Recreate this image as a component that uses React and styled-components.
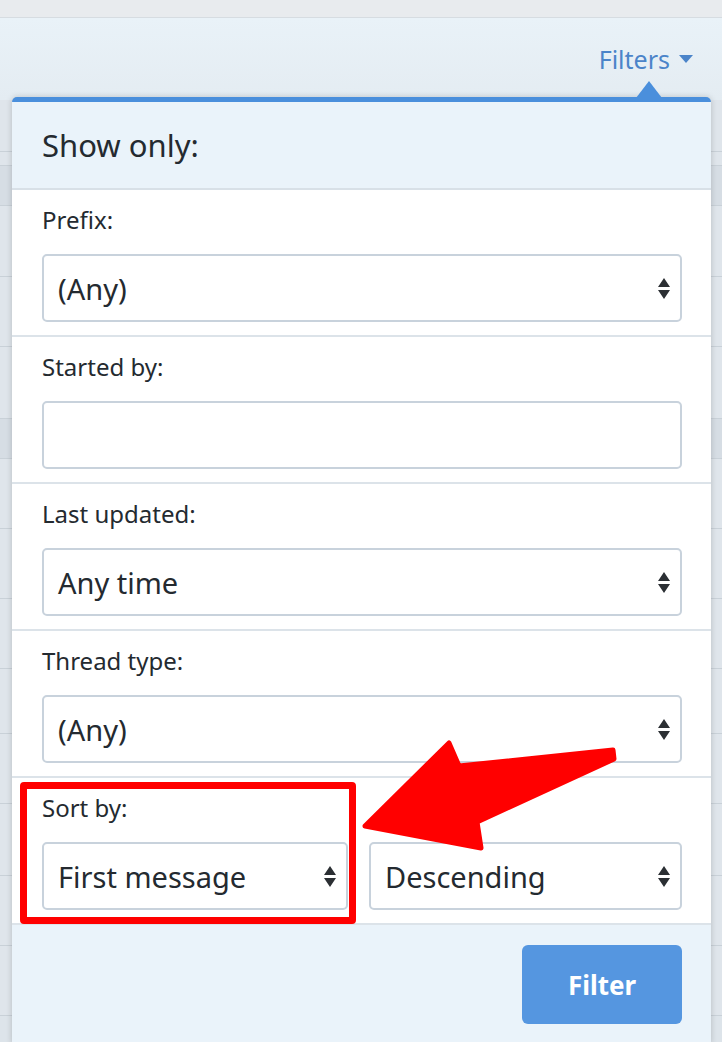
import React from "react";
import styled, { createGlobalStyle } from "styled-components";

const Global = createGlobalStyle`
  html, body { margin: 0; padding: 0; }
  body {
    background: #dfe5ea;
    font-family: "Noto Sans", "Open Sans", sans-serif;
    color: #242a30;
  }
  * { box-sizing: border-box; }
`;

const Page = styled.div`
  position: relative;
  width: 722px;
  height: 1042px;
  overflow: hidden;
  background: #dde4ea;
`;

const TopStrip = styled.div`
  height: 18px;
  background: #e8ebee;
  border-bottom: 1px solid #d6dce1;
`;

const NavBar = styled.div`
  height: 82px;
  display: flex;
  align-items: center;
  justify-content: flex-end;
  padding-right: 29px;
  background: linear-gradient(#e9f2f8, #e4ecf2);
`;

const FiltersLink = styled.span`
  display: flex;
  align-items: center;
  gap: 9px;
  font-size: 25px;
  color: #4b84c9;
`;

const ListArea = styled.div`
  display: flex;
  flex-direction: column;
`;

const ListRow = styled.div`
  height: ${(p) => p.$h}px;
  background: ${(p) => (p.$shade ? "#d6dde4" : "#dfe5eb")};
  border-bottom: 1px solid #c9d1d8;
`;

const Menu = styled.div`
  position: absolute;
  top: 97px;
  left: 12px;
  width: 699px;
  border-top: 5px solid #4a8fdc;
  border-radius: 5px 5px 0 0;
  background: #ffffff;
  box-shadow: 0 0 6px rgba(0, 0, 0, 0.18);
`;

const Pointer = styled.svg`
  position: absolute;
  top: -21px;
  left: 624px;
`;

const Header = styled.div`
  height: 88px;
  display: flex;
  align-items: center;
  padding: 0 29px 0 30px;
  background: #eaf3fa;
  border-bottom: 2px solid #d8e0e7;
  font-size: 31px;
`;

const Row = styled.div`
  padding: 13px 29px 13px 30px;
  border-bottom: 2px solid #dce3e9;
  display: flex;
  flex-direction: column;
`;

const Label = styled.div`
  font-size: 24px;
  line-height: 34px;
  margin-bottom: 17px;
`;

const Pair = styled.div`
  display: grid;
  grid-template-columns: 306px 1fr;
  gap: 21px;
`;

const SelectBox = styled.div`
  height: 68px;
  display: flex;
  align-items: center;
  justify-content: space-between;
  padding: 0 10px 0 14px;
  border: 2px solid #c8d2dc;
  border-radius: 5px;
  background: #fff;
  font-size: 29px;
  color: #242a30;
`;

const TextInput = styled.input`
  height: 68px;
  border: 2px solid #c8d2dc;
  border-radius: 5px;
  background: #fff;
  font: inherit;
  font-size: 29px;
  padding: 0 14px;
  outline: none;
`;

const Footer = styled.div`
  display: flex;
  justify-content: flex-end;
  padding: 20px 29px 20px 30px;
  background: #eaf3fa;
`;

const Button = styled.button`
  width: 160px;
  height: 79px;
  border: none;
  border-radius: 6px;
  background: #5596e0;
  color: #fff;
  font-family: "Noto Sans", sans-serif;
  font-weight: 700;
  font-size: 26px;
`;

const Highlight = styled.div`
  position: absolute;
  left: 20px;
  top: 782px;
  width: 336px;
  height: 142px;
  border: 7px solid #ff0000;
  border-radius: 4px;
  pointer-events: none;
`;

const Arrow = styled.svg`
  position: absolute;
  left: 340px;
  top: 730px;
  pointer-events: none;
`;

const Updown = () => (
  <svg width="12" height="21" viewBox="0 0 12 21">
    <path d="M6 0 L12 9 L0 9 Z M0 12 L12 12 L6 21 Z" fill="#2b2f33" />
  </svg>
);

const Select = ({ children }) => (
  <SelectBox>
    <span>{children}</span>
    <Updown />
  </SelectBox>
);

const Caret = () => (
  <svg width="14" height="8" viewBox="0 0 14 8">
    <path d="M0 0 L14 0 L7 8 Z" fill="#4b84c9" />
  </svg>
);

const rows = [
  { h: 52, s: false },
  { h: 14, s: false },
  { h: 40, s: true },
  { h: 71, s: false },
  { h: 70, s: false },
  { h: 72, s: false },
  { h: 40, s: true },
  { h: 70, s: false },
  { h: 70, s: false },
  { h: 70, s: false },
  { h: 65, s: false },
  { h: 70, s: false },
  { h: 72, s: false },
  { h: 70, s: false },
  { h: 70, s: false },
];

export default function App() {
  return (
    <>
      <Global />
      <Page>
        <TopStrip />
        <NavBar>
          <FiltersLink>
            Filters <Caret />
          </FiltersLink>
        </NavBar>
        <ListArea>
          {rows.map((r, i) => (
            <ListRow key={i} $h={r.h} $shade={r.s} />
          ))}
        </ListArea>

        <Menu>
          <Pointer width="26" height="17" viewBox="0 0 26 17">
            <path d="M0 17 L13 0 L26 17 Z" fill="#4a8fdc" />
          </Pointer>
          <Header>Show only:</Header>
          <Row>
            <Label>Prefix:</Label>
            <Select>(Any)</Select>
          </Row>
          <Row>
            <Label>Started by:</Label>
            <TextInput type="text" />
          </Row>
          <Row>
            <Label>Last updated:</Label>
            <Select>Any time</Select>
          </Row>
          <Row>
            <Label>Thread type:</Label>
            <Select>(Any)</Select>
          </Row>
          <Row>
            <Label>Sort by:</Label>
            <Pair>
              <Select>First message</Select>
              <Select>Descending</Select>
            </Pair>
          </Row>
          <Footer>
            <Button>Filter</Button>
          </Footer>
        </Menu>

        <Highlight />
        <Arrow width="300" height="130" viewBox="0 0 300 130">
          <polygon
            points="25,96 109,13 119,36 273,20 274,29 137,92 141,118"
            fill="#ff0000"
            stroke="#ff0000"
            strokeWidth="5"
            strokeLinejoin="round"
          />
        </Arrow>
      </Page>
    </>
  );
}
